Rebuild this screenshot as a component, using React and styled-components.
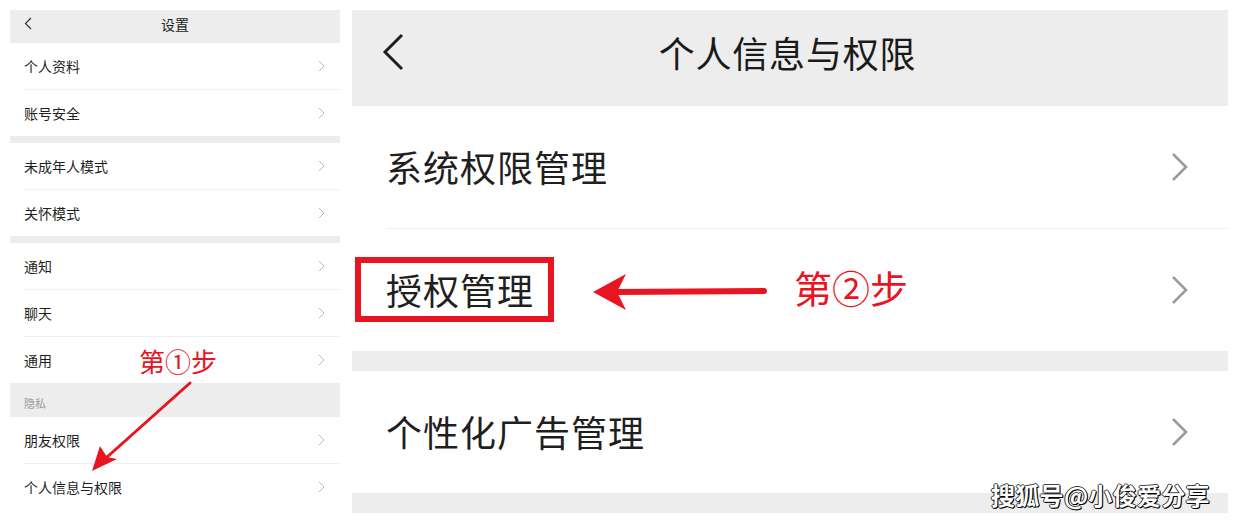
import styled, { createGlobalStyle, css } from 'styled-components';

const GlobalStyle = createGlobalStyle`
  html, body {
    margin: 0;
    padding: 0;
    background: #fff;
  }
  body {
    font-family: "Noto Sans CJK SC", "Noto Sans", sans-serif;
    color: #1a1a1a;
  }
`;

const Page = styled.div`
  position: relative;
  width: 1239px;
  height: 525px;
  overflow: hidden;
  display: flex;
  align-items: flex-start;
  gap: 12px;
  padding: 10px 11px 0 10px;
  box-sizing: border-box;
`;

const Panel = styled.div`
  width: ${({ $width }) => $width}px;
  flex-shrink: 0;
  display: flex;
  flex-direction: column;
  background: #fff;
`;

const SmallHeader = styled.div`
  height: 33px;
  background: #ededed;
  display: flex;
  align-items: center;
  padding: 0 14px 6px;
  box-sizing: border-box;
`;

const SmallTitle = styled.div`
  flex: 1;
  text-align: center;
  font-size: 14px;
  color: #222;
  margin-right: 8px;
`;

const BigHeader = styled.div`
  height: 96px;
  background: #ededed;
  display: flex;
  align-items: center;
  padding: 0 33px 12px 30px;
  box-sizing: border-box;
`;

const BigTitle = styled.div`
  flex: 1;
  text-align: center;
  font-size: 36px;
  color: #1a1a1a;
  margin-right: 24px;
  letter-spacing: 0.8px;
`;

const Gap = styled.div`
  height: ${({ $h }) => $h}px;
  background: #ededed;
`;

const SectionLabel = styled.div`
  height: 34px;
  background: #ededed;
  font-size: 11px;
  color: #9a9a9a;
  padding: 12px 14px 0;
  box-sizing: border-box;
`;

const Group = styled.div`
  display: flex;
  flex-direction: column;
  & > * + * {
    border-top: 1px solid #f1f1f1;
  }
`;

const Row = styled.div`
  display: flex;
  align-items: center;
  justify-content: space-between;
  box-sizing: content-box;
  color: #1f1f1f;
  ${({ $big }) =>
    $big
      ? css`
          height: 122px;
          margin-left: 34px;
          padding-right: 40px;
          font-size: 36px;
        `
      : css`
          height: 46px;
          margin-left: 14px;
          padding-right: 15px;
          font-size: 14px;
        `}
`;

const Label = styled.span`
  position: relative;
  line-height: 1.2;
  letter-spacing: ${({ $big }) => ($big ? '1px' : '0')};
  ${({ $boxed }) =>
    $boxed &&
    css`
      &::before {
        content: '';
        position: absolute;
        top: -11px;
        bottom: -10px;
        left: -31px;
        right: -20px;
        border: 6px solid #e8141f;
      }
    `}
`;

const StepText = styled.div`
  position: absolute;
  left: ${({ $x }) => $x}px;
  top: ${({ $y }) => $y}px;
  color: #e8141f;
  font-size: ${({ $size }) => $size}px;
  line-height: 1;
  white-space: nowrap;
`;

const Overlay = styled.svg`
  position: absolute;
  left: 0;
  top: 0;
  pointer-events: none;
`;

const Watermark = styled.div`
  position: absolute;
  left: 991px;
  top: 482px;
  font-size: 24px;
  font-weight: 700;
  line-height: 1.1;
  color: #fff;
  letter-spacing: 0.3px;
  text-shadow: 1px 1px 0 #000, -1px 0 0 #333, 0 -1px 0 #444, 1px 0 0 #222, 0 1px 0 #111;
`;

function Chevron({ big }) {
  return big ? (
    <svg width="17" height="30" viewBox="0 0 17 30">
      <polyline points="2,2 15,15 2,28" fill="none" stroke="#9b9b9b" strokeWidth="2.6" />
    </svg>
  ) : (
    <svg width="7" height="12" viewBox="0 0 7 12">
      <polyline points="1,1 6,6 1,11" fill="none" stroke="#b8b8b8" strokeWidth="1" />
    </svg>
  );
}

function BackIcon({ big }) {
  return big ? (
    <svg width="22" height="38" viewBox="0 0 22 38">
      <polyline points="20,2 3,19 20,36" fill="none" stroke="#1f1f1f" strokeWidth="3" />
    </svg>
  ) : (
    <svg width="8" height="13" viewBox="0 0 8 13">
      <polyline points="7,1 1.5,6.5 7,12" fill="none" stroke="#333" strokeWidth="1.2" />
    </svg>
  );
}

function SettingRow({ label, big, boxed }) {
  return (
    <Row $big={big}>
      <Label $big={big} $boxed={boxed}>{label}</Label>
      <Chevron big={big} />
    </Row>
  );
}

export default function App() {
  return (
    <Page>
      <GlobalStyle />
      <Panel $width={330}>
        <SmallHeader>
          <BackIcon />
          <SmallTitle>设置</SmallTitle>
        </SmallHeader>
        <Group>
          <SettingRow label="个人资料" />
          <SettingRow label="账号安全" />
        </Group>
        <Gap $h={7} />
        <Group>
          <SettingRow label="未成年人模式" />
          <SettingRow label="关怀模式" />
        </Group>
        <Gap $h={7} />
        <Group>
          <SettingRow label="通知" />
          <SettingRow label="聊天" />
          <SettingRow label="通用" />
        </Group>
        <SectionLabel>隐私</SectionLabel>
        <Group>
          <SettingRow label="朋友权限" />
          <SettingRow label="个人信息与权限" />
        </Group>
      </Panel>

      <Panel $width={876}>
        <BigHeader>
          <BackIcon big />
          <BigTitle>个人信息与权限</BigTitle>
        </BigHeader>
        <Group>
          <SettingRow big label="系统权限管理" />
          <SettingRow big boxed label="授权管理" />
        </Group>
        <Gap $h={20} />
        <SettingRow big label="个性化广告管理" />
        <Gap $h={20} />
      </Panel>

      <Overlay width="1239" height="525" viewBox="0 0 1239 525">
        <line x1="190" y1="383" x2="106" y2="458" stroke="#e8141f" strokeWidth="3" strokeLinecap="round" />
        <polygon points="92,471 100,446 107,457 117,459" fill="#e8141f" />
        <line x1="764" y1="291" x2="615" y2="292" stroke="#e8141f" strokeWidth="6" strokeLinecap="round" />
        <polygon points="593,292 626,274 617,292 626,310" fill="#e8141f" />
      </Overlay>

      <StepText $x={139} $y={348} $size={26}>第①步</StepText>
      <StepText $x={794} $y={268} $size={38}>第②步</StepText>
      <Watermark>搜狐号@小俊爱分享</Watermark>
    </Page>
  );
}
